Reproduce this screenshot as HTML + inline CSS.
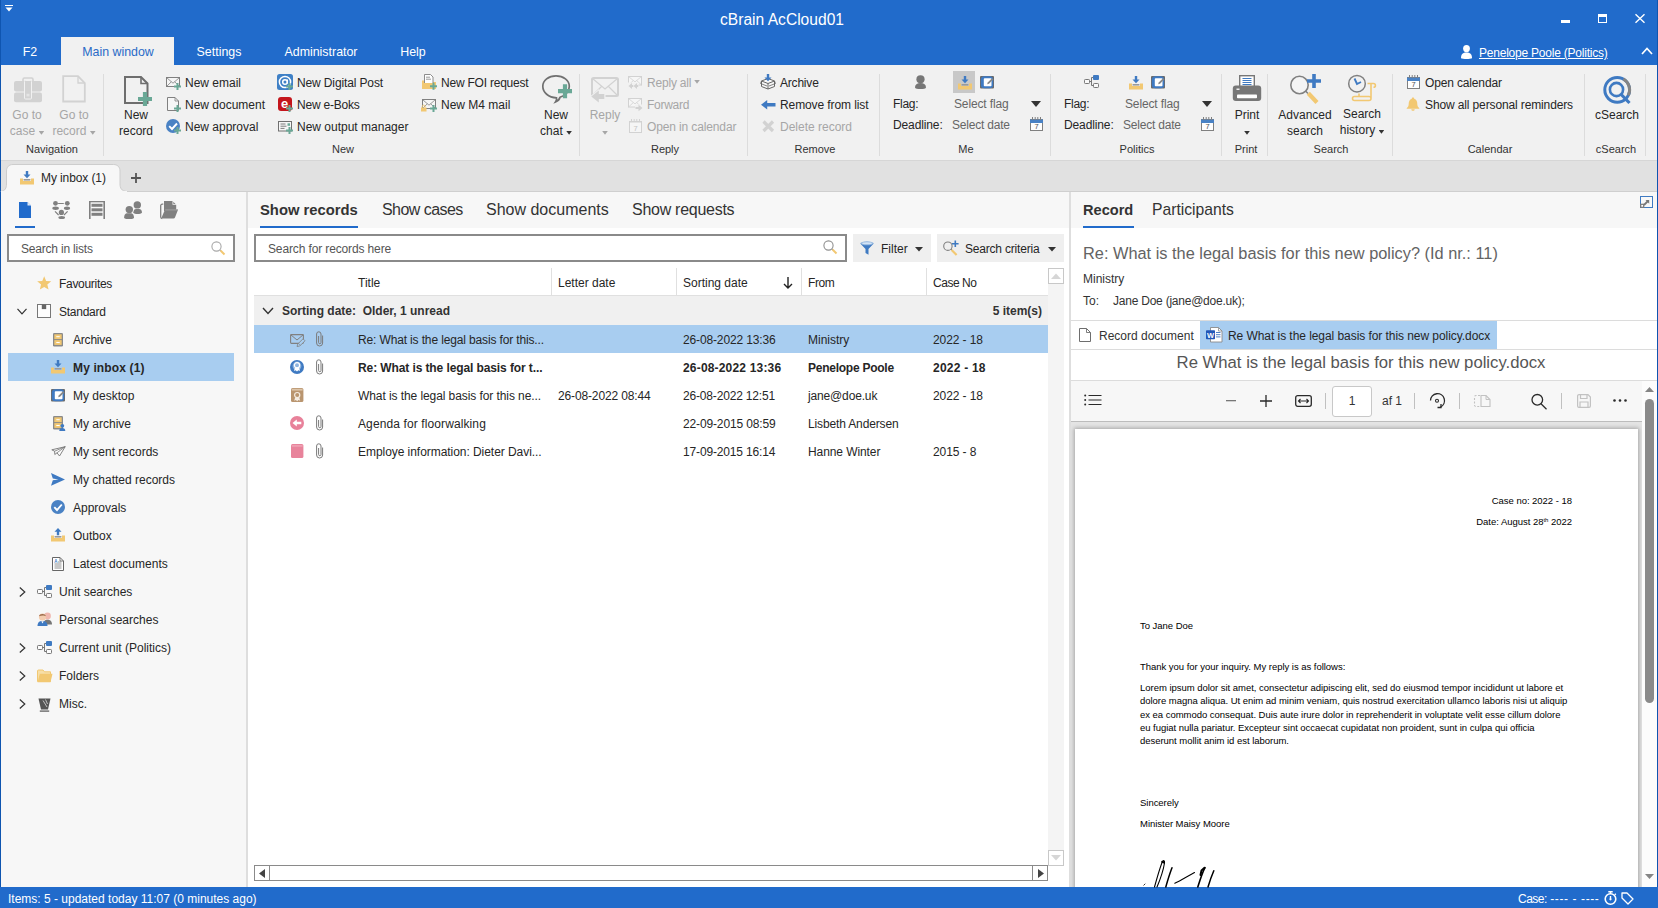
<!DOCTYPE html>
<html lang="en"><head><meta charset="utf-8"><title>cBrain AcCloud01</title>
<style>
*{box-sizing:border-box;margin:0;padding:0}
html,body{width:1658px;height:908px;overflow:hidden;background:#fff}
body{font-family:"Liberation Sans",sans-serif;font-size:12px;color:#262626;position:relative}
.a{position:absolute;white-space:pre}
.t{position:absolute;white-space:pre;line-height:16px;height:16px}
.c{text-align:center}
.dis{color:#a6a6a6}
.w{color:#fff}
svg{position:absolute;overflow:visible}
.dd{display:inline-block;width:5.6px;height:3.6px;background:#333;clip-path:polygon(0 0,100% 0,50% 100%);margin-left:3.5px;vertical-align:middle;position:relative;top:1px}
.dd.solo{margin-left:0}
.sep{position:absolute;width:1px;background:#dcdcdc;top:74px;height:82px}
</style></head>
<body>
<div class="a" style="left:0px;top:0px;width:1658px;height:65px;background:#216bcb;"></div>
<div class="a" style="left:0px;top:65px;width:1658px;height:96px;background:#f1f1f1;"></div>
<div class="a" style="left:0px;top:160px;width:1658px;height:1px;background:#d6d6d6;"></div>
<div class="a" style="left:0px;top:161px;width:1658px;height:30px;background:#e1e1e1;"></div>
<div class="a" style="left:0px;top:191px;width:1658px;height:1px;background:#cfcfcf;"></div>
<div class="a" style="left:0px;top:0px;width:1px;height:908px;background:#0f55b0;"></div>
<div class="a" style="left:1657px;top:0px;width:1px;height:908px;background:#0f55b0;"></div>
<div class="t c w" style="left:632.0px;width:300px;top:11px;font-size:15.6px;line-height:20px;height:20px;top:10px">cBrain AcCloud01</div>
<div class="a" style="left:1561px;top:20px;width:9px;height:3px;background:#fff;"></div>
<div class="a" style="left:1598px;top:14px;width:9px;height:9px;border:1px solid #fff;border-top-width:3px"></div>
<svg style="left:1635px;top:14px" width="10" height="9" viewBox="0 0 10 9"><path d="M0.5 0.2L9.5 8.8M9.5 0.2L0.5 8.8" stroke="#fff" stroke-width="1.4" fill="none"/></svg>
<svg style="left:5px;top:5px" width="8" height="7" viewBox="0 0 8 7"><rect x="0" y="0" width="8" height="1" fill="#fff"/><path d="M0.5 2.5h7L4 6.5z" fill="#fff"/></svg>
<div class="a" style="left:61px;top:37px;width:113px;height:28px;background:#f1f1f1;"></div>
<div class="t c w" style="left:-30.0px;width:120px;top:44px;font-size:12.4px">F2</div>
<div class="t c " style="left:58.0px;width:120px;top:44px;font-size:12.4px;color:#2a6bc7">Main window</div>
<div class="t c w" style="left:159.0px;width:120px;top:44px;font-size:12.4px">Settings</div>
<div class="t c w" style="left:261.0px;width:120px;top:44px;font-size:12.4px">Administrator</div>
<div class="t c w" style="left:353.0px;width:120px;top:44px;font-size:12.4px">Help</div>
<svg style="left:1461px;top:45px" width="11" height="14" viewBox="0 0 11 14"><ellipse cx="5.5" cy="3.6" rx="3.4" ry="3.6" fill="#fff"/><path d="M0 13.2c0-4 2-5.6 5.5-5.6s5.5 1.600 5.500 5.600c-1.500 1-9.500 1-11 0z" fill="#fff"/></svg>
<div class="t w" style="left:1479px;top:45px;font-size:12px;letter-spacing:-0.22px;text-decoration:underline;text-underline-offset:0.5px">Penelope Poole (Politics)</div>
<svg style="left:1641px;top:47px" width="12" height="8" viewBox="0 0 12 8"><path d="M1 7L6 1.500L11 7" stroke="#fff" stroke-width="1.700" fill="none"/></svg>
<div class="sep" style="left:103px"></div>
<div class="sep" style="left:579px"></div>
<div class="sep" style="left:747px"></div>
<div class="sep" style="left:879px"></div>
<div class="sep" style="left:1050px"></div>
<div class="sep" style="left:1221px"></div>
<div class="sep" style="left:1267px"></div>
<div class="sep" style="left:1392px"></div>
<div class="sep" style="left:1584px"></div>
<div class="sep" style="left:1645px"></div>
<div class="t c " style="left:-8.0px;width:120px;top:141px;color:#333;font-size:11px">Navigation</div>
<div class="t c " style="left:283.0px;width:120px;top:141px;color:#333;font-size:11px">New</div>
<div class="t c " style="left:605.0px;width:120px;top:141px;color:#333;font-size:11px">Reply</div>
<div class="t c " style="left:755.0px;width:120px;top:141px;color:#333;font-size:11px">Remove</div>
<div class="t c " style="left:906.0px;width:120px;top:141px;color:#333;font-size:11px">Me</div>
<div class="t c " style="left:1077.0px;width:120px;top:141px;color:#333;font-size:11px">Politics</div>
<div class="t c " style="left:1186.0px;width:120px;top:141px;color:#333;font-size:11px">Print</div>
<div class="t c " style="left:1271.0px;width:120px;top:141px;color:#333;font-size:11px">Search</div>
<div class="t c " style="left:1430.0px;width:120px;top:141px;color:#333;font-size:11px">Calendar</div>
<div class="t c " style="left:1556.0px;width:120px;top:141px;color:#333;font-size:11px">cSearch</div>
<div class="t c dis" style="left:-33.0px;width:120px;top:107px;">Go to</div>
<div class="t c dis" style="left:-33px;width:120px;top:123px">case<i class="dd" style="background:#a6a6a6"></i></div>
<div class="t c dis" style="left:14.0px;width:120px;top:107px;">Go to</div>
<div class="t c dis" style="left:14px;width:120px;top:123px">record<i class="dd" style="background:#a6a6a6"></i></div>
<div class="t c " style="left:76.0px;width:120px;top:107px;">New</div>
<div class="t c " style="left:76px;width:120px;top:123px">record</div>
<div class="t c " style="left:496.0px;width:120px;top:107px;">New</div>
<div class="t c " style="left:496px;width:120px;top:123px">chat<i class="dd" style="background:#333"></i></div>
<div class="t c dis" style="left:545.0px;width:120px;top:107px;">Reply</div>
<div class="t c dis" style="left:545px;width:120px;top:123px"><i class="dd solo" style="background:#a6a6a6"></i></div>
<div class="t c " style="left:1187.0px;width:120px;top:107px;">Print</div>
<div class="t c " style="left:1187px;width:120px;top:123px"><i class="dd solo" style="background:#333"></i></div>
<div class="t c " style="left:1245.0px;width:120px;top:107px;">Advanced</div>
<div class="t c " style="left:1245px;width:120px;top:123px">search</div>
<div class="t c " style="left:1302.0px;width:120px;top:106px;">Search</div>
<div class="t c " style="left:1302px;width:120px;top:122px">history<i class="dd" style="background:#333"></i></div>
<div class="t c " style="left:1557.0px;width:120px;top:107px;">cSearch</div>
<div class="t " style="left:185px;top:75px;">New email</div>
<div class="t " style="left:185px;top:97px;">New document</div>
<div class="t " style="left:185px;top:119px;">New approval</div>
<div class="t " style="left:297px;top:75px;;letter-spacing:-0.13px">New Digital Post</div>
<div class="t " style="left:297px;top:97px;;letter-spacing:-0.22px">New e-Boks</div>
<div class="t " style="left:297px;top:119px;">New output manager</div>
<div class="t " style="left:441px;top:75px;;letter-spacing:-0.22px">New FOI request</div>
<div class="t " style="left:441px;top:97px;">New M4 mail</div>
<div class="t " style="left:780px;top:75px;;letter-spacing:-0.2px">Archive</div>
<div class="t " style="left:780px;top:97px;;letter-spacing:-0.1px">Remove from list</div>
<div class="t " style="left:1425px;top:75px;;letter-spacing:-0.15px">Open calendar</div>
<div class="t " style="left:1425px;top:97px;;letter-spacing:-0.127px">Show all personal reminders</div>
<div class="t dis" style="left:647px;top:75px"><span style="letter-spacing:-0.2px">Reply all</span><i class="dd" style="background:#a6a6a6;top:-2px;margin-left:3px"></i></div>
<div class="t dis" style="left:647px;top:97px;;letter-spacing:-0.28px">Forward</div>
<div class="t dis" style="left:647px;top:119px;;letter-spacing:-0.13px">Open in calendar</div>
<div class="t dis" style="left:780px;top:119px;">Delete record</div>
<div class="t " style="left:893px;top:96px;;letter-spacing:-0.3px">Flag:</div>
<div class="t " style="left:893px;top:117px;;letter-spacing:-0.12px">Deadline:</div>
<div class="t " style="left:954px;top:96px;color:#666;letter-spacing:-0.14px">Select flag</div>
<div class="t " style="left:952px;top:117px;color:#666;letter-spacing:-0.2px">Select date</div>
<div class="t " style="left:1064px;top:96px;;letter-spacing:-0.3px">Flag:</div>
<div class="t " style="left:1064px;top:117px;;letter-spacing:-0.12px">Deadline:</div>
<div class="t " style="left:1125px;top:96px;color:#666;letter-spacing:-0.14px">Select flag</div>
<div class="t " style="left:1123px;top:117px;color:#666;letter-spacing:-0.2px">Select date</div>
<div class="a" style="left:953px;top:71px;width:22px;height:22px;background:#c8c8c8;"></div>
<svg style="left:0px;top:161px" width="130" height="31" viewBox="0 161 130 31"><path d="M1 191.500C5 191 6.500 188 6.500 184V171C6.500 167 9 164.500 13 164.500H113.500C117.500 164.500 120 167 120 171V184C120 188 121.500 191 126.500 191.500V192H1z" fill="#f7f7f7" stroke="#cdcdcd" stroke-width="1"/><rect x="1" y="191" width="126" height="1.500" fill="#f7f7f7"/></svg>
<div class="t " style="left:41px;top:170px;letter-spacing:-0.1px">My inbox (1)</div>
<svg style="left:131px;top:173px" width="10" height="10" viewBox="0 0 10 10"><path d="M5 0v10M0 5h10" stroke="#555" stroke-width="1.800"/></svg>
<div class="a" style="left:1px;top:192px;width:245px;height:695px;background:#f7f7f7;"></div>
<div class="a" style="left:246px;top:192px;width:2px;height:695px;background:#dedede;"></div>
<div class="a" style="left:248px;top:192px;width:821px;height:36px;background:#f7f7f7;"></div>
<div class="a" style="left:1069px;top:192px;width:2px;height:695px;background:#dedede;"></div>
<div class="a" style="left:1071px;top:192px;width:586px;height:36px;background:#f7f7f7;"></div>
<div class="a" style="left:0px;top:887px;width:1658px;height:21px;background:#216bcb;"></div>
<div class="t w" style="left:8px;top:891px;">Items: 5 - updated today 11:07 (0 minutes ago)</div>
<div class="t w" style="left:1518px;top:891px"><span style="letter-spacing:-0.5px">Case:</span> <span style="letter-spacing:0.6px">---- - ----</span></div>
<div class="a" style="left:15px;top:226px;width:20px;height:2px;background:#216bcb;"></div>
<div class="a" style="left:7px;top:234px;width:228px;height:28px;background:#fff;border:2px solid #8a8a8a"></div>
<div class="t " style="left:21px;top:241px;color:#555;letter-spacing:-0.2px">Search in lists</div>
<div class="a" style="left:8px;top:353px;width:226px;height:28px;background:#a8cdf0;"></div>
<div class="t " style="left:59px;top:276px;;letter-spacing:-0.3px">Favourites</div>
<div class="t " style="left:59px;top:304px;;letter-spacing:-0.25px">Standard</div>
<svg style="left:17px;top:307.5px" width="10" height="7" viewBox="0 0 10 7"><path d="M0.500 0.800L5 5.800L9.500 0.800" stroke="#333" stroke-width="1.200" fill="none"/></svg>
<div class="t " style="left:73px;top:332px;;letter-spacing:-0.2px">Archive</div>
<div class="t " style="left:73px;top:360px;font-weight:700;letter-spacing:0.13px">My inbox (1)</div>
<div class="t " style="left:73px;top:388px;">My desktop</div>
<div class="t " style="left:73px;top:416px;">My archive</div>
<div class="t " style="left:73px;top:444px;">My sent records</div>
<div class="t " style="left:73px;top:472px;">My chatted records</div>
<div class="t " style="left:73px;top:500px;">Approvals</div>
<div class="t " style="left:73px;top:528px;">Outbox</div>
<div class="t " style="left:73px;top:556px;">Latest documents</div>
<div class="t " style="left:59px;top:584px;">Unit searches</div>
<svg style="left:19px;top:586.5px" width="7" height="10" viewBox="0 0 7 10"><path d="M0.800 0.500L5.800 5L0.800 9.500" stroke="#333" stroke-width="1.200" fill="none"/></svg>
<div class="t " style="left:59px;top:612px;">Personal searches</div>
<div class="t " style="left:59px;top:640px;">Current unit (Politics)</div>
<svg style="left:19px;top:642.5px" width="7" height="10" viewBox="0 0 7 10"><path d="M0.800 0.500L5.800 5L0.800 9.500" stroke="#333" stroke-width="1.200" fill="none"/></svg>
<div class="t " style="left:59px;top:668px;">Folders</div>
<svg style="left:19px;top:670.5px" width="7" height="10" viewBox="0 0 7 10"><path d="M0.800 0.500L5.800 5L0.800 9.500" stroke="#333" stroke-width="1.200" fill="none"/></svg>
<div class="t " style="left:59px;top:696px;">Misc.</div>
<svg style="left:19px;top:698.5px" width="7" height="10" viewBox="0 0 7 10"><path d="M0.800 0.500L5.800 5L0.800 9.500" stroke="#333" stroke-width="1.200" fill="none"/></svg>
<div class="a" style="left:260px;top:226px;width:98px;height:2px;background:#216bcb;"></div>
<div class="t " style="left:260px;top:202px;font-size:14.8px;font-weight:700;line-height:20px;height:20px;top:200px;color:#333">Show records</div>
<div class="t " style="left:382px;top:202px;font-size:16px;line-height:20px;height:20px;top:200px;color:#333;letter-spacing:-0.55px">Show cases</div>
<div class="t " style="left:486px;top:202px;font-size:16px;line-height:20px;height:20px;top:200px;color:#333">Show documents</div>
<div class="t " style="left:632px;top:202px;font-size:16px;line-height:20px;height:20px;top:200px;color:#333;letter-spacing:-0.27px">Show requests</div>
<div class="a" style="left:254px;top:234px;width:593px;height:28px;background:#fff;border:2px solid #8a8a8a"></div>
<div class="t " style="left:268px;top:241px;color:#555;letter-spacing:-0.13px">Search for records here</div>
<div class="a" style="left:853px;top:234px;width:78px;height:28px;background:#efefef;"></div>
<div class="t " style="left:881px;top:241px;">Filter</div>
<div class="a" style="left:937px;top:234px;width:127px;height:28px;background:#efefef;"></div>
<div class="t " style="left:965px;top:241px;letter-spacing:-0.2px">Search criteria</div>
<svg style="left:915px;top:246.7px" width="8" height="5" viewBox="0 0 8 5"><path d="M0 0h8L4 4.500z" fill="#333"/></svg>
<svg style="left:1048px;top:246.7px" width="8" height="5" viewBox="0 0 8 5"><path d="M0 0h8L4 4.500z" fill="#333"/></svg>
<div class="a" style="left:551px;top:268px;width:1px;height:28px;background:#e0e0e0;"></div>
<div class="a" style="left:676px;top:268px;width:1px;height:28px;background:#e0e0e0;"></div>
<div class="a" style="left:801px;top:268px;width:1px;height:28px;background:#e0e0e0;"></div>
<div class="a" style="left:926px;top:268px;width:1px;height:28px;background:#e0e0e0;"></div>
<div class="a" style="left:254px;top:295px;width:794px;height:1px;background:#e0e0e0;"></div>
<div class="t " style="left:358px;top:275px;">Title</div>
<div class="t " style="left:558px;top:275px;">Letter date</div>
<div class="t " style="left:683px;top:275px;">Sorting date</div>
<div class="t " style="left:808px;top:275px;;letter-spacing:-0.4px">From</div>
<div class="t " style="left:933px;top:275px;;letter-spacing:-0.45px">Case No</div>
<svg style="left:783px;top:277px" width="10" height="12" viewBox="0 0 10 12"><path d="M5 0v11M1 7L5 11L9 7" stroke="#222" stroke-width="1.400" fill="none"/></svg>
<div class="a" style="left:254px;top:296px;width:794px;height:29px;background:#f0f0f0;"></div>
<svg style="left:262px;top:307px" width="12" height="8" viewBox="0 0 12 8"><path d="M1 1L6 6.500L11 1" stroke="#333" stroke-width="1.400" fill="none"/></svg>
<div class="t " style="left:282px;top:303px;font-weight:700;color:#333">Sorting date:  Older, 1 unread</div>
<div class="t" style="left:942px;width:100px;text-align:right;top:303px;font-weight:700;color:#333">5 item(s)</div>
<div class="a" style="left:254px;top:325px;width:794px;height:28px;background:#a8cdf0;"></div>
<div class="t " style="left:358px;top:332px;;letter-spacing:-0.14px">Re: What is the legal basis for this...</div>
<div class="t " style="left:683px;top:332px;;letter-spacing:-0.14px">26-08-2022 13:36</div>
<div class="t " style="left:808px;top:332px;">Ministry</div>
<div class="t " style="left:933px;top:332px;;letter-spacing:-0.1px">2022 - 18</div>
<div class="t " style="left:358px;top:360px;font-weight:700;letter-spacing:-0.1px">Re: What is the legal basis for t...</div>
<div class="t " style="left:683px;top:360px;font-weight:700;letter-spacing:0.18px">26-08-2022 13:36</div>
<div class="t " style="left:808px;top:360px;font-weight:700;letter-spacing:-0.25px">Penelope Poole</div>
<div class="t " style="left:933px;top:360px;font-weight:700;letter-spacing:0.22px">2022 - 18</div>
<div class="t " style="left:358px;top:388px;;letter-spacing:-0.08px">What is the legal basis for this ne...</div>
<div class="t " style="left:558px;top:388px;;letter-spacing:-0.14px">26-08-2022 08:44</div>
<div class="t " style="left:683px;top:388px;;letter-spacing:-0.17px">26-08-2022 12:51</div>
<div class="t " style="left:808px;top:388px;;letter-spacing:-0.15px">jane@doe.uk</div>
<div class="t " style="left:933px;top:388px;;letter-spacing:-0.1px">2022 - 18</div>
<div class="t " style="left:358px;top:416px;;letter-spacing:0.11px">Agenda for floorwalking</div>
<div class="t " style="left:683px;top:416px;;letter-spacing:-0.14px">22-09-2015 08:59</div>
<div class="t " style="left:808px;top:416px;;letter-spacing:-0.14px">Lisbeth Andersen</div>
<div class="t " style="left:358px;top:444px;;letter-spacing:-0.05px">Employe information: Dieter Davi...</div>
<div class="t " style="left:683px;top:444px;;letter-spacing:-0.15px">17-09-2015 16:14</div>
<div class="t " style="left:808px;top:444px;;letter-spacing:-0.09px">Hanne Winter</div>
<div class="t " style="left:933px;top:444px;;letter-spacing:-0.1px">2015 - 8</div>
<div class="a" style="left:1048px;top:268px;width:16px;height:598px;background:#f4f4f4;"></div>
<div class="a" style="left:1048px;top:268px;width:16px;height:16px;background:#fff;border:1px solid #c8c8c8"></div>
<div class="a" style="left:1048px;top:850px;width:16px;height:16px;background:#fff;border:1px solid #c8c8c8"></div>
<svg style="left:1051px;top:273px" width="10" height="6" viewBox="0 0 10 6"><path d="M0 6h10L5 0.500z" fill="#d6d6d6"/></svg>
<svg style="left:1051px;top:855px" width="10" height="6" viewBox="0 0 10 6"><path d="M0 0h10L5 5.500z" fill="#d6d6d6"/></svg>
<div class="a" style="left:254px;top:865px;width:16px;height:16px;background:#fff;border:1px solid #8a8a8a"></div>
<div class="a" style="left:269px;top:865px;width:764px;height:16px;background:#fff;border:1px solid #8a8a8a"></div>
<div class="a" style="left:1032px;top:865px;width:16px;height:16px;background:#fff;border:1px solid #8a8a8a"></div>
<svg style="left:259px;top:868.500px" width="6" height="9" viewBox="0 0 6 9"><path d="M6 0v9L0 4.500z" fill="#444"/></svg>
<svg style="left:1037.500px;top:868.500px" width="6" height="9" viewBox="0 0 6 9"><path d="M0 0v9L6 4.500z" fill="#444"/></svg>
<div class="a" style="left:1083px;top:226px;width:51px;height:2px;background:#216bcb;"></div>
<div class="t " style="left:1083px;top:202px;font-size:14.6px;font-weight:700;line-height:20px;height:20px;top:200px;color:#333">Record</div>
<div class="t " style="left:1152px;top:202px;font-size:15.7px;line-height:20px;height:20px;top:200px;color:#333">Participants</div>
<div class="t " style="left:1083px;top:245px;font-size:16.35px;line-height:22px;height:22px;top:242px;color:#636363">Re: What is the legal basis for this new policy? (Id nr.: 11)</div>
<div class="t " style="left:1083px;top:271px;color:#333">Ministry</div>
<div class="t " style="left:1083px;top:293px;color:#333">To:</div>
<div class="t " style="left:1113px;top:293px;color:#333;letter-spacing:-0.23px">Jane Doe (jane@doe.uk);</div>
<div class="a" style="left:1071px;top:320px;width:586px;height:1px;background:#dcdcdc;"></div>
<div class="a" style="left:1071px;top:349px;width:586px;height:1px;background:#dcdcdc;"></div>
<div class="a" style="left:1071px;top:380px;width:586px;height:1px;background:#dcdcdc;"></div>
<div class="a" style="left:1200px;top:321px;width:297px;height:28px;background:#a8cdf0;"></div>
<div class="t " style="left:1099px;top:328px;color:#333">Record document</div>
<div class="t " style="left:1228px;top:328px;letter-spacing:-0.06px">Re What is the legal basis for this new policy.docx</div>
<div class="t c " style="left:1111.0px;width:500px;top:355px;font-size:16.7px;line-height:22px;height:22px;top:352px;color:#555">Re What is the legal basis for this new policy.docx</div>
<div class="a" style="left:1071px;top:381px;width:571px;height:40px;background:#f7f7f7;"></div>
<div class="a" style="left:1071px;top:421px;width:571px;height:1px;background:#bcbcbc;"></div>
<div class="a" style="left:1071px;top:422px;width:571px;height:465px;background:#e4e4e4;"></div>
<div class="a" style="left:1071px;top:422px;width:571px;height:465px;overflow:hidden"><div class="a" style="left:4px;top:7px;width:563px;height:470px;background:#fff;box-shadow:0 0 4px 1px rgba(0,0,0,.28)"></div></div>
<div class="a" style="left:1642px;top:381px;width:15px;height:506px;background:#fcfcfc;"></div>
<div class="a" style="left:1645px;top:399px;width:9px;height:304px;background:#8a8a8a;border-radius:4.5px"></div>
<div class="a" style="left:1332px;top:386px;width:40px;height:31px;background:#fff;border:1px solid #c8c8c8;border-radius:3px"></div>
<div class="t c " style="left:1342.0px;width:20px;top:393px;color:#333">1</div>
<div class="t " style="left:1382px;top:393px;color:#333">af 1</div>
<div class="a" style="left:1325px;top:393px;width:1px;height:16px;background:#c0c0c0;"></div>
<div class="a" style="left:1414px;top:393px;width:1px;height:16px;background:#c0c0c0;"></div>
<div class="a" style="left:1459px;top:393px;width:1px;height:16px;background:#c0c0c0;"></div>
<div class="a" style="left:1561px;top:393px;width:1px;height:16px;background:#c0c0c0;"></div>
<div class="t" style="right:86px;top:495px;font-size:9.5px;line-height:12px;height:12px;color:#000;letter-spacing:-0.03px;">Case no: 2022 - 18</div>
<div class="t" style="right:86px;top:516px;font-size:9.5px;line-height:12px;height:12px;color:#000;letter-spacing:-0.03px;">Date: August 28<span style="font-size:6px;position:relative;top:-3px">th</span> 2022</div>
<div class="t" style="left:1140px;top:620px;font-size:9.5px;line-height:12px;height:12px;color:#000;letter-spacing:-0.03px;">To Jane Doe</div>
<div class="t" style="left:1140px;top:661px;font-size:9.5px;line-height:12px;height:12px;color:#000;letter-spacing:-0.03px;">Thank you for your inquiry. My reply is as follows:</div>
<div class="t" style="left:1140px;top:682.0px;font-size:9.5px;line-height:12px;height:12px;color:#000;letter-spacing:-0.03px;">Lorem ipsum dolor sit amet, consectetur adipiscing elit, sed do eiusmod tempor incididunt ut labore et</div>
<div class="t" style="left:1140px;top:695.35px;font-size:9.5px;line-height:12px;height:12px;color:#000;letter-spacing:-0.03px;">dolore magna aliqua. Ut enim ad minim veniam, quis nostrud exercitation ullamco laboris nisi ut aliquip</div>
<div class="t" style="left:1140px;top:708.7px;font-size:9.5px;line-height:12px;height:12px;color:#000;letter-spacing:-0.03px;">ex ea commodo consequat. Duis aute irure dolor in reprehenderit in voluptate velit esse cillum dolore</div>
<div class="t" style="left:1140px;top:722.05px;font-size:9.5px;line-height:12px;height:12px;color:#000;letter-spacing:-0.03px;">eu fugiat nulla pariatur. Excepteur sint occaecat cupidatat non proident, sunt in culpa qui officia</div>
<div class="t" style="left:1140px;top:735.4px;font-size:9.5px;line-height:12px;height:12px;color:#000;letter-spacing:-0.03px;">deserunt mollit anim id est laborum.</div>
<div class="t" style="left:1140px;top:797px;font-size:9.5px;line-height:12px;height:12px;color:#000;letter-spacing:-0.03px;">Sincerely</div>
<div class="t" style="left:1140px;top:818px;font-size:9.5px;line-height:12px;height:12px;color:#000;letter-spacing:-0.03px;">Minister Maisy Moore</div>
<svg style="left:14px;top:77px" width="28" height="26" viewBox="0 0 28 26"><path d="M9 4.500V2.500a1.500 1.500 0 0 1 1.500-1.500h7a1.500 1.500 0 0 1 1.500 1.500V4.500" fill="none" stroke="#d2d2d2" stroke-width="1.600"/><rect x="0" y="4" width="28" height="10.500" rx="2" fill="#d2d2d2"/><rect x="0" y="15.500" width="28" height="9.800" rx="2" fill="#d2d2d2"/><rect x="10.500" y="3.500" width="7" height="18.500" rx="1" fill="#d2d2d2" stroke="#f1f1f1" stroke-width="1"/><rect x="12.500" y="16.800" width="3" height="2.600" fill="#e4e4e4"/></svg>
<svg style="left:62px;top:75px" width="24" height="28" viewBox="0 0 24 28"><path d="M1.200 1.200H16L22.800 8V26.500H1.200z" fill="none" stroke="#d2d2d2" stroke-width="1.800"/><path d="M16 1.200V8H22.800" fill="none" stroke="#d2d2d2" stroke-width="1.300"/></svg>
<svg style="left:124px;top:76px" width="30" height="31" viewBox="0 0 30 31"><path d="M1 1H17L23.500 7.500V27H1z" fill="none" stroke="#6e6e6e" stroke-width="2"/><path d="M17 1V7.500H23.500" fill="none" stroke="#6e6e6e" stroke-width="1.600"/><path d="M18.9 16h4.2v4.9h4.9v4.2h-4.9v4.9h-4.2v-4.9h-4.9v-4.2h4.9z" fill="#6aa896"/></svg>
<svg style="left:166px;top:77px" width="16" height="14" viewBox="0 0 16 14"><rect x="0.5" y="0.5" width="13" height="9" fill="#fff" fill-opacity="0.350" stroke="#808080" stroke-width="1"/><path d="M0.5 0.5L7.0 6.2L13.5 0.5M0.5 9.5L5.32 4.8M13.5 9.5L8.68 4.8" fill="none" stroke="#808080" stroke-width="0.8"/><path d="M10.5 6.0h2v2.5h2.5v2h-2.5v2.5h-2v-2.5h-2.5v-2h2.5z" fill="#6aa896"/></svg>
<svg style="left:166px;top:97px" width="16" height="16" viewBox="0 0 16 16"><path d="M1.500 0.500H9L12.500 4V13.500H1.500z" fill="#fff" fill-opacity="0.400" stroke="#808080" stroke-width="1"/><path d="M9 0.500V4H12.500" fill="none" stroke="#808080" stroke-width="0.800"/><path d="M10.5 8.0h2v2.5h2.5v2h-2.5v2.5h-2v-2.5h-2.5v-2h2.5z" fill="#6aa896"/></svg>
<svg style="left:166px;top:119px" width="16" height="16" viewBox="0 0 16 16"><circle cx="7" cy="7" r="7" fill="#4a82c4"/><path d="M3.200 7.200L6 10L11 4.500" fill="none" stroke="#fff" stroke-width="1.900"/><path d="M10.5 8.0h2v2.5h2.5v2h-2.5v2.5h-2v-2.5h-2.5v-2h2.5z" fill="#6aa896"/></svg>
<svg style="left:277px;top:74px" width="17" height="17" viewBox="0 0 17 17"><rect x="0" y="0" width="16" height="16" rx="2.500" fill="#3f80c6"/><circle cx="8" cy="8" r="5.600" fill="none" stroke="#fff" stroke-width="1.500"/><circle cx="8" cy="8" r="2.300" fill="none" stroke="#fff" stroke-width="1.500"/><path d="M10.400 5.500V9.500" stroke="#fff" stroke-width="1.300"/><path d="M11.5 9.0h2v2.5h2.5v2h-2.5v2.5h-2v-2.5h-2.5v-2h2.5z" fill="#6aa896"/></svg>
<svg style="left:278px;top:97px" width="16" height="16" viewBox="0 0 16 16"><rect x="0" y="0" width="14" height="14" rx="3" fill="#c4161c"/><text x="6.600" y="11.200" font-family="Liberation Sans" font-weight="700" font-size="13" fill="#fff" text-anchor="middle">e</text><path d="M10.5 8.0h2v2.5h2.5v2h-2.5v2.5h-2v-2.5h-2.5v-2h2.5z" fill="#6aa896"/></svg>
<svg style="left:278px;top:121px" width="16" height="14" viewBox="0 0 16 14"><rect x="0.500" y="0.500" width="13" height="9.500" fill="#fff" fill-opacity="0.400" stroke="#707070"/><path d="M2.500 3h5M2.500 5.200h6M2.500 7.400h4" stroke="#707070" stroke-width="0.900"/><rect x="9.500" y="2.300" width="2.500" height="2.500" fill="#6aa896"/><path d="M10.5 6.0h2v2.5h2.5v2h-2.5v2.5h-2v-2.5h-2.5v-2h2.5z" fill="#6aa896"/></svg>
<svg style="left:421px;top:74px" width="17" height="17" viewBox="0 0 17 17"><path d="M1 6.500H5.500L7 8H15V15H1z" fill="#f2c872"/><path d="M3.500 0.500H9.500L12 3V10.500H3.500z" fill="#fff" stroke="#808080" stroke-width="0.900"/><path d="M5 3.200h4M5 5.200h5" stroke="#808080" stroke-width="0.800"/><path d="M1 9H15V15H1z" fill="#f2c872"/><path d="M11.5 8.7h2v2.5h2.5v2h-2.5v2.5h-2v-2.5h-2.5v-2h2.5z" fill="#6aa896"/></svg>
<svg style="left:421px;top:99px" width="17" height="14" viewBox="0 0 17 14"><rect transform="translate(1 0)" x="0.5" y="0.5" width="13" height="9" fill="#fff" fill-opacity="0.350" stroke="#808080" stroke-width="1"/><path transform="translate(1 0)" d="M0.5 0.5L7.0 6.2L13.5 0.5M0.5 9.5L5.32 4.8M13.5 9.5L8.68 4.8" fill="none" stroke="#808080" stroke-width="0.8"/><rect x="0" y="8.500" width="5.500" height="4" fill="#f2c872"/><path d="M1.300 8.500V7.500a1.400 1.400 0 0 1 2.800 0V8.500" fill="none" stroke="#f2c872" stroke-width="0.900"/><path d="M11.5 6.0h2v2.5h2.5v2h-2.5v2.5h-2v-2.5h-2.5v-2h2.5z" fill="#6aa896"/></svg>
<svg style="left:541px;top:74px" width="32" height="30" viewBox="0 0 32 30"><path d="M15 1.800C22.500 1.800 28.300 6.500 28.300 12.300C28.300 17.500 24.500 21.500 19 23.300C18.500 25.500 17 27 14.500 28C15.500 26.500 15.800 25 15.500 23.800C7.500 23.500 1.800 18.500 1.800 12.300C1.800 6.500 7.500 1.800 15 1.800z" fill="none" stroke="#707070" stroke-width="1.700"/><path d="M21.9 10.2h4.2v4.9h4.9v4.2h-4.9v4.9h-4.2v-4.9h-4.9v-4.2h4.9z" fill="#6aa896"/></svg>
<svg style="left:591px;top:77px" width="28" height="26" viewBox="0 0 28 26"><rect x="1" y="1" width="26" height="18" rx="1.500" fill="none" stroke="#d2d2d2" stroke-width="2"/><path d="M1.500 1.500L14 12L26.500 1.500M1.500 18.500L10.500 9.500M26.500 18.500L17.500 9.500" fill="none" stroke="#d2d2d2" stroke-width="1.200"/><path d="M-1 19.500L8 12V15.800H14.500V23.200H8V27z" fill="#f1f1f1"/><path d="M0.300 19.500L7.800 13.500V17H13.300V22H7.800V25.500z" fill="#d2d2d2"/></svg>
<svg style="left:628px;top:76px" width="15" height="14" viewBox="0 0 15 14"><rect x="0.5" y="0.5" width="13" height="8.5" fill="#fff" fill-opacity="0.350" stroke="#d2d2d2" stroke-width="1"/><path d="M0.5 0.5L7.0 5.89L13.5 0.5M0.5 9.0L5.32 4.56M13.5 9.0L8.68 4.56" fill="none" stroke="#d2d2d2" stroke-width="0.8"/><rect x="0" y="6.500" width="10.500" height="7.500" fill="#f1f1f1"/><path d="M0.500 10L4 7V9H5.200V11H4V13zM5.500 10L9 7V9H10.200V11H9V13z" fill="#d2d2d2"/></svg>
<svg style="left:628px;top:98px" width="15" height="14" viewBox="0 0 15 14"><rect x="0.5" y="0.5" width="13" height="8.5" fill="#fff" fill-opacity="0.350" stroke="#d2d2d2" stroke-width="1"/><path d="M0.5 0.5L7.0 5.89L13.5 0.5M0.5 9.0L5.32 4.56M13.5 9.0L8.68 4.56" fill="none" stroke="#d2d2d2" stroke-width="0.8"/><rect x="7" y="6.500" width="8" height="7.500" fill="#f1f1f1"/><path d="M14.500 10L10.500 6.800V9H7.500V11H10.500V13.200z" fill="#d2d2d2"/></svg>
<svg style="left:629px;top:119px" width="13" height="14" viewBox="0 0 13 14"><rect x="0.500" y="2.500" width="12" height="11" fill="#fff" fill-opacity="0.3" stroke="#d2d2d2" stroke-width="1"/><rect x="0" y="2.500" width="13" height="1" fill="#d2d2d2"/><path d="M2.500 0v3M5.200 0v3M7.800 0v3M10.500 0v3" stroke="#d2d2d2" stroke-width="1"/><text x="6.500" y="12.300" font-family="Liberation Sans" font-size="7.500" fill="#c4c4c4" text-anchor="middle">7</text></svg>
<svg style="left:1030px;top:117px" width="13" height="14" viewBox="0 0 13 14"><rect x="0.500" y="2.500" width="12" height="11" fill="#fff" fill-opacity="0.9" stroke="#808080" stroke-width="1"/><rect x="0" y="2.500" width="13" height="3.5" fill="#4a82c4"/><path d="M2.500 0v3M5.200 0v3M7.800 0v3M10.500 0v3" stroke="#808080" stroke-width="1"/><text x="6.500" y="12.300" font-family="Liberation Sans" font-size="7.500" fill="#555" text-anchor="middle">7</text></svg>
<svg style="left:1201px;top:117px" width="13" height="14" viewBox="0 0 13 14"><rect x="0.500" y="2.500" width="12" height="11" fill="#fff" fill-opacity="0.9" stroke="#808080" stroke-width="1"/><rect x="0" y="2.500" width="13" height="3.5" fill="#4a82c4"/><path d="M2.500 0v3M5.200 0v3M7.800 0v3M10.500 0v3" stroke="#808080" stroke-width="1"/><text x="6.500" y="12.300" font-family="Liberation Sans" font-size="7.500" fill="#555" text-anchor="middle">7</text></svg>
<svg style="left:1407px;top:75px" width="13" height="14" viewBox="0 0 13 14"><rect x="0.500" y="2.500" width="12" height="11" fill="#fff" fill-opacity="0.9" stroke="#808080" stroke-width="1"/><rect x="0" y="2.500" width="13" height="3.5" fill="#4a82c4"/><path d="M2.500 0v3M5.200 0v3M7.800 0v3M10.500 0v3" stroke="#808080" stroke-width="1"/><text x="6.500" y="12.300" font-family="Liberation Sans" font-size="7.500" fill="#555" text-anchor="middle">7</text></svg>
<svg style="left:760px;top:73px" width="16" height="17" viewBox="0 0 16 17"><path d="M1.500 8L8 5.500L14.500 8V13.500L8 16L1.500 13.500z" fill="#fff" fill-opacity="0.500" stroke="#666" stroke-width="1"/><path d="M1.500 8L8 10.500L14.500 8M8 10.500V16" fill="none" stroke="#666" stroke-width="1"/><path d="M1.500 8L0.500 10.500L7 13M14.500 8L15.500 10.500L9 13" fill="none" stroke="#666" stroke-width="0.800"/><path d="M6.800 1H9.200V4.500H11.500L8 8.200L4.500 4.500H6.800z" fill="#3f7ac2"/></svg>
<svg style="left:761px;top:100px" width="15" height="10" viewBox="0 0 15 10"><path d="M0 4.700L6.200 0V3H14.500V6.500H6.200V9.500z" fill="#3f7ac2"/></svg>
<svg style="left:762px;top:120px" width="13" height="13" viewBox="0 0 13 13"><path d="M1.500 1.500L11 11M11 1.500L1.500 11" stroke="#d2d2d2" stroke-width="3.200"/></svg>
<svg style="left:914.5px;top:75px" width="11" height="15" viewBox="0 0 11 15"><circle cx="5.500" cy="4.300" r="4.100" fill="#777"/><path d="M0 12.500C0 9.500 2 8 5.500 8S11 9.500 11 12.500C11 14.500 0 14.500 0 12.500z" fill="#777"/></svg>
<svg style="left:958px;top:75.5px" width="14" height="14" viewBox="0 0 14 14"><path d="M0 7.500H3V10H11V7.500H14V13.500H0z" fill="#f2c872"/><rect x="3.600" y="8" width="6.800" height="1.600" fill="#9a9a9a"/><path d="M5.800 0H8.200V3.500H10.500L7 7.200L3.500 3.500H5.800z" fill="#3f7ac2"/></svg>
<svg style="left:1129px;top:75.5px" width="14" height="14" viewBox="0 0 14 14"><path d="M0 7.500H3V10H11V7.500H14V13.500H0z" fill="#f2c872"/><rect x="3.600" y="8" width="6.800" height="1.600" fill="#9a9a9a"/><path d="M5.800 0H8.200V3.500H10.500L7 7.200L3.500 3.500H5.800z" fill="#3f7ac2"/></svg>
<svg style="left:980px;top:76px" width="14" height="13" viewBox="0 0 14 13"><rect x="0" y="0" width="14" height="12.500" rx="1" fill="#6a6a6a"/><rect x="0.800" y="0.300" width="12.400" height="11.900" rx="3.500" fill="#3f7ac2"/><rect x="3.800" y="2.200" width="7.700" height="8.100" rx="0.800" fill="#fff"/><path d="M7.200 8.300L7.700 6.500L12 2.200L13.300 3.500L9 7.800z" fill="#888"/></svg>
<svg style="left:1151px;top:76px" width="14" height="13" viewBox="0 0 14 13"><rect x="0" y="0" width="14" height="12.500" rx="1" fill="#6a6a6a"/><rect x="0.800" y="0.300" width="12.400" height="11.900" rx="3.500" fill="#3f7ac2"/><rect x="3.800" y="2.200" width="7.700" height="8.100" rx="0.800" fill="#fff"/><path d="M7.200 8.300L7.700 6.500L12 2.200L13.300 3.500L9 7.800z" fill="#888"/></svg>
<svg style="left:1084px;top:75px" width="15" height="13" viewBox="0 0 15 13"><path d="M5.500 6.500H7.500M7.500 2.500V10.500M7.500 2.500H9.500M7.500 10.500H9.500" stroke="#777" stroke-width="1" fill="none"/><rect x="0.500" y="4.500" width="5" height="4" rx="0.800" fill="#fff" fill-opacity="0.600" stroke="#777"/><rect x="9" y="0" width="6" height="5" rx="1" fill="#3f7ac2"/><rect x="9.500" y="8.500" width="5" height="4" rx="0.800" fill="#fff" fill-opacity="0.600" stroke="#777"/></svg>
<svg style="left:1031px;top:101px" width="10" height="6" viewBox="0 0 10 6"><path d="M0 0H10L5 6z" fill="#333"/></svg>
<svg style="left:1202px;top:101px" width="10" height="6" viewBox="0 0 10 6"><path d="M0 0H10L5 6z" fill="#333"/></svg>
<svg style="left:1232px;top:75px" width="30" height="27" viewBox="0 0 30 27"><rect x="7.700" y="0.700" width="14.600" height="12" fill="#fff" stroke="#777" stroke-width="1.400"/><path d="M10.500 3.500h9M10.500 5.500h9M10.500 7.500h9M10.500 9.500h9" stroke="#3f7ac2" stroke-width="1"/><rect x="0.800" y="10.500" width="28.400" height="15.500" rx="3" fill="#777"/><rect x="5" y="19.500" width="20" height="3.800" rx="0.800" fill="#fff"/><rect x="4.500" y="13.500" width="3" height="1.500" fill="#eee"/></svg>
<svg style="left:1289px;top:73px" width="34" height="32" viewBox="0 0 34 32"><circle cx="10.500" cy="12" r="8.700" fill="#fff" fill-opacity="0.250" stroke="#808080" stroke-width="1.600"/><path d="M16.800 18.300L19 20.500" stroke="#808080" stroke-width="1.600"/><path d="M19.300 20.300L28 29.500" stroke="#f2c872" stroke-width="4.200"/><path d="M23.2 1h3.6v5.2h5.2v3.6h-5.2v5.2h-3.6v-5.2h-5.2v-3.6h5.2z" fill="#3f7ac2"/></svg>
<svg style="left:1347px;top:74px" width="30" height="30" viewBox="0 0 30 30"><path d="M20.500 9.500H26.500a1.800 1.800 0 0 1 0 3.800M24 9.500V24.500a2 2 0 0 1-2 2M7.500 22.500H22a2 2 0 0 1 0 4H7.500a2 2 0 0 1 0-4zM12 22V19.500" fill="none" stroke="#f2c872" stroke-width="1.600"/><circle cx="10" cy="9.700" r="8.300" fill="#f1f1f1" stroke="#808080" stroke-width="1.500"/><path d="M7.500 4.500L10 10L14 8" fill="none" stroke="#3f7ac2" stroke-width="1.900"/></svg>
<svg style="left:1406px;top:97px" width="14" height="14" viewBox="0 0 14 14"><path d="M7 0.500C7.800 0.500 8.200 1 8.200 1.800C10.500 2.500 11.300 4.500 11.300 7C11.300 9 12 10 13.300 11.200V11.800H0.700V11.200C2 10 2.700 9 2.700 7C2.700 4.500 3.500 2.500 5.800 1.800C5.800 1 6.200 0.500 7 0.500zM5.300 12.300H8.700C8.700 13.300 8 13.800 7 13.800S5.300 13.300 5.300 12.300z" fill="#f2c872"/></svg>
<svg style="left:1602px;top:75px" width="30" height="30" viewBox="0 0 30 30"><circle cx="15.200" cy="14.800" r="12.400" fill="none" stroke="#3f7ac2" stroke-width="3"/><path d="M21.400 4.060A12.400 12.400 0 0 1 26.300 20.400" fill="none" stroke="#858585" stroke-width="3"/><circle cx="14.500" cy="14.500" r="6.600" fill="none" stroke="#3f7ac2" stroke-width="2.600"/><path d="M19.200 19.500L27.500 28" stroke="#3f7ac2" stroke-width="3.200"/></svg>
<svg style="left:19px;top:202px" width="12" height="16" viewBox="0 0 12 16"><path d="M0 0H8.500L12 3.500V16H0z" fill="#216bcb"/><path d="M8.500 0V3.500H12z" fill="#fff" fill-opacity="0.850"/></svg>
<svg style="left:52px;top:201px" width="19" height="18" viewBox="0 0 19 18"><path d="M6.100 2.500H11.800M3 10.300L6.600 14M15.600 10.300L12 14" stroke="#808080" stroke-width="1.200" fill="none"/><circle cx="3.500" cy="2.300" r="2.400" fill="#808080"/><ellipse cx="3.600" cy="7.300" rx="3.300" ry="1.700" fill="#808080"/><circle cx="15.300" cy="2.300" r="2.400" fill="#808080"/><ellipse cx="15" cy="7.300" rx="3.100" ry="1.700" fill="#808080"/><circle cx="9.400" cy="11.400" r="2.600" fill="#808080"/><ellipse cx="9.700" cy="16.600" rx="3.300" ry="1.500" fill="#808080"/></svg>
<svg style="left:89px;top:201px" width="16" height="18" viewBox="0 0 16 18"><path d="M0.800 0V18M15.200 0V18" stroke="#808080" stroke-width="1.600"/><rect x="0" y="0" width="16" height="1.300" fill="#808080"/><rect x="2.500" y="2.800" width="11" height="3" fill="#808080"/><rect x="2.500" y="7.300" width="11" height="3" fill="#808080"/><rect x="2.500" y="11.800" width="11" height="3" fill="#808080"/></svg>
<svg style="left:124px;top:201px" width="19" height="19" viewBox="0 0 19 19"><circle cx="13.3" cy="3.9" r="3.7" fill="#808080"/><path d="M9.2 11.8C9.2 8.9 10.783999999999999 7.9 12.016 7.9H15.184C16.416 7.9 18 8.9 18 11.8C16.68 13.4 10.52 13.4 9.2 11.8z" fill="#808080"/><circle cx="5.300" cy="8.600" r="4.500" fill="#f7f7f7"/><path d="M-0.500 19C-0.500 13 2 11.500 5.300 11.500S10.800 13 10.800 19z" fill="#f7f7f7"/><circle cx="5.3" cy="8.6" r="3.7" fill="#808080"/><path d="M0.1 16.900000000000002C0.1 13.2 1.8820000000000001 12.2 3.2680000000000002 12.2H6.832C8.218 12.2 10 13.2 10 16.900000000000002C8.515 18.5 1.5850000000000002 18.5 0.1 16.900000000000002z" fill="#808080"/></svg>
<svg style="left:160px;top:201px" width="19" height="18" viewBox="0 0 19 18"><path d="M4 0.100H12.500V3.800H16.200V10H4z" fill="#808080"/><path d="M13.300 0.800L15.500 3H13.300z" fill="#808080"/><path d="M3.300 3.200H2.200A1.500 1.500 0 0 0 0.700 4.700V16A1.500 1.500 0 0 0 2.200 17.500" fill="none" stroke="#808080" stroke-width="1.300"/><path d="M1.200 17.600L4.600 9.500A1.600 1.600 0 0 1 6.100 8.400H18.100L15 16.600A1.600 1.600 0 0 1 13.500 17.600z" fill="#808080"/><path d="M5.200 8.900H17.800" stroke="#aaa" stroke-width="0.800"/></svg>
<svg style="left:211.3px;top:240.8px" width="15" height="15" viewBox="0 0 15 15"><circle cx="5.500" cy="5.500" r="4.600" fill="none" stroke="#a8a8a8" stroke-width="1.100"/><path d="M8.800 8.800L9.800 9.800" stroke="#a8a8a8" stroke-width="1.100"/><path d="M9.500 9.500L13.500 13.500" stroke="#f2c872" stroke-width="2"/></svg>
<svg style="left:823px;top:240.2px" width="15" height="15" viewBox="0 0 15 15"><circle cx="5.500" cy="5.500" r="4.600" fill="none" stroke="#909090" stroke-width="1.100"/><path d="M8.800 8.800L9.800 9.800" stroke="#909090" stroke-width="1.100"/><path d="M9.500 9.500L13.500 13.500" stroke="#f2c872" stroke-width="2"/></svg>
<svg style="left:36.8px;top:276.4px" width="15" height="15" viewBox="0 0 15 15"><polygon points="7.20,0.20 9.14,4.93 14.24,5.31 10.34,8.62 11.55,13.59 7.20,10.90 2.85,13.59 4.06,8.62 0.16,5.31 5.26,4.93" fill="#f2c872"/></svg>
<svg style="left:37px;top:304px" width="14" height="14" viewBox="0 0 14 14"><rect x="0.500" y="0.500" width="13" height="13" fill="#fff" fill-opacity="0.700" stroke="#777"/><rect x="4.800" y="0.500" width="4.400" height="4.600" fill="#666"/></svg>
<svg style="left:53px;top:332.5px" width="13" height="15" viewBox="0 0 13 15"><rect x="0" y="0" width="10" height="13.500" rx="1.300" fill="#8a8a8a"/><rect x="1.300" y="1.300" width="7.400" height="4.800" fill="#f2c872"/><rect x="1.300" y="7.100" width="7.400" height="4.800" fill="#f2c872"/><rect x="3.300" y="3.200" width="3.400" height="1" fill="#fff"/><rect x="3.300" y="9" width="3.400" height="1" fill="#fff"/></svg>
<svg style="left:53px;top:416px" width="13" height="15" viewBox="0 0 13 15"><rect x="0" y="0" width="10" height="13.500" rx="1.300" fill="#8a8a8a"/><rect x="1.300" y="1.300" width="7.400" height="4.800" fill="#f2c872"/><rect x="1.300" y="7.100" width="7.400" height="4.800" fill="#f2c872"/><rect x="3.300" y="3.200" width="3.400" height="1" fill="#fff"/><rect x="3.300" y="9" width="3.400" height="1" fill="#fff"/><circle cx="9.300" cy="9.800" r="1.900" fill="#3f7ac2"/><path d="M6.300 15C6.300 12.800 7.500 12 9.300 12S12.300 12.800 12.300 15z" fill="#3f7ac2"/></svg>
<svg style="left:51px;top:360px" width="14" height="14" viewBox="0 0 14 14"><path d="M0 7.500H3V10H11V7.500H14V13.500H0z" fill="#f2c872"/><rect x="3.600" y="8" width="6.800" height="1.600" fill="#9a9a9a"/><path d="M5.800 0H8.200V3.500H10.500L7 7.200L3.500 3.500H5.800z" fill="#3f7ac2"/></svg>
<svg style="left:51px;top:389px" width="14" height="13" viewBox="0 0 14 13"><rect x="0" y="0" width="14" height="12.500" rx="1" fill="#6a6a6a"/><rect x="0.800" y="0.300" width="12.400" height="11.900" rx="3.500" fill="#3f7ac2"/><rect x="3.800" y="2.200" width="7.700" height="8.100" rx="0.800" fill="#fff"/><path d="M7.200 8.300L7.700 6.500L12 2.200L13.300 3.500L9 7.800z" fill="#888"/></svg>
<svg style="left:51px;top:446px" width="15" height="11" viewBox="0 0 15 11"><path d="M0.800 3.800L14.200 0.700L8.500 10L6 6.800L3.800 8.500L3.600 5.200z" fill="#fff" fill-opacity="0.500" stroke="#777" stroke-width="0.900" stroke-linejoin="round"/><path d="M14.200 0.700L3.600 5.200M14.200 0.700L6 6.800" stroke="#777" stroke-width="0.800" fill="none"/></svg>
<svg style="left:51px;top:473px" width="14" height="13" viewBox="0 0 14 13"><path d="M0 0L14 6.400L0 12.800L1.800 7.300L7.500 6.400L1.800 5.500z" fill="#3f7ac2"/></svg>
<svg style="left:51px;top:500px" width="14" height="14" viewBox="0 0 14 14"><circle cx="7" cy="7" r="7" fill="#4a82c4"/><path d="M3.300 7.200L6 10L10.800 4.500" fill="none" stroke="#fff" stroke-width="1.900"/></svg>
<svg style="left:51px;top:528px" width="14" height="14" viewBox="0 0 14 14"><path d="M0 7.500H3V10H11V7.500H14V13.500H0z" fill="#f2c872"/><rect x="3.600" y="8" width="6.800" height="1.600" fill="#9a9a9a"/><path d="M5.800 7.200H8.200V3.700H10.500L7 0L3.500 3.700H5.800z" fill="#3f7ac2"/></svg>
<svg style="left:52px;top:556.5px" width="12" height="14" viewBox="0 0 12 14"><path d="M0.500 0.500H8L11.500 4V13.500H0.500z" fill="#fff" stroke="#666" stroke-width="1"/><path d="M8 0.500V4H11.500" fill="none" stroke="#666" stroke-width="0.800"/><path d="M2.500 7h7M2.500 9h7M2.500 11h7M6 5h3.500" stroke="#777" stroke-width="0.800"/><text x="2.200" y="5.800" font-family="Liberation Sans" font-weight="700" font-size="4.500" fill="#3f7ac2">A</text></svg>
<svg style="left:37px;top:584.5px" width="15" height="13" viewBox="0 0 15 13"><path d="M5.500 6.500H7.500M7.500 2.500V10.500M7.500 2.500H9.500M7.500 10.500H9.500" stroke="#777" stroke-width="1" fill="none"/><rect x="0.500" y="4.500" width="5" height="4" rx="0.800" fill="#fff" fill-opacity="0.600" stroke="#777"/><rect x="9" y="0" width="6" height="5" rx="1" fill="#3f7ac2"/><rect x="9.500" y="8.500" width="5" height="4" rx="0.800" fill="#fff" fill-opacity="0.600" stroke="#777"/></svg>
<svg style="left:37px;top:640.5px" width="15" height="13" viewBox="0 0 15 13"><path d="M5.500 6.500H7.500M7.500 2.500V10.500M7.500 2.500H9.500M7.500 10.500H9.500" stroke="#777" stroke-width="1" fill="none"/><rect x="0.500" y="4.500" width="5" height="4" rx="0.800" fill="#fff" fill-opacity="0.600" stroke="#777"/><rect x="9" y="0" width="6" height="5" rx="1" fill="#3f7ac2"/><rect x="9.500" y="8.500" width="5" height="4" rx="0.800" fill="#fff" fill-opacity="0.600" stroke="#777"/></svg>
<svg style="left:37px;top:612px" width="16" height="14" viewBox="0 0 16 14"><circle cx="10.500" cy="4" r="3.400" fill="#f0b8b0"/><path d="M6.500 12.500C6.500 9 8 7.800 10.500 7.800S15 9 15 12.500z" fill="#777"/><circle cx="5.500" cy="5" r="3.600" fill="#f3cdb0"/><path d="M2 4.200C2.500 1.500 8 1 9 4.200C7.500 3.300 4 3.300 2 4.200z" fill="#9a6a4a"/><path d="M0.500 14C0.500 10.300 2.500 9 5.500 9S10.500 10.300 10.500 14z" fill="#3f7ac2"/><path d="M4.300 9.200L5.500 11.500L6.700 9.200z" fill="#fff"/></svg>
<svg style="left:37px;top:669px" width="16" height="14" viewBox="0 0 16 14"><path d="M0.500 2a1 1 0 0 1 1-1H6L7.500 2.800H13.500V12.500H0.500z" fill="#f7dfa8" stroke="#f2c872" stroke-width="1"/><path d="M2.800 4.800H15.500L13.500 13.300H0.600z" fill="#f2c872"/></svg>
<svg style="left:38px;top:698px" width="13" height="14" viewBox="0 0 13 14"><path d="M0.500 0.500H12.500L10 11.500H3z" fill="#555"/><path d="M5 2.500L9 9M7.500 1.500L9.500 6" stroke="#ccc" stroke-width="0.900"/><rect x="1.800" y="12.500" width="9.400" height="1.200" fill="#555"/></svg>
<svg style="left:20px;top:170.5px" width="14" height="14" viewBox="0 0 14 14"><path d="M0 7.500H3V10H11V7.500H14V13.500H0z" fill="#f2c872"/><rect x="3.600" y="8" width="6.800" height="1.600" fill="#9a9a9a"/><path d="M5.800 0H8.200V3.500H10.500L7 7.200L3.500 3.500H5.800z" fill="#3f7ac2"/></svg>
<svg style="left:315.5px;top:331px" width="8" height="16" viewBox="0 0 8 16"><path d="M6.600 4.500V12A3 3 0 0 1 0.600 12V3A2.200 2.200 0 0 1 5 3V11.500A1 1 0 0 1 2.600 11.500V5" fill="none" stroke="#7a7a7a" stroke-width="1"/></svg>
<svg style="left:315.5px;top:359px" width="8" height="16" viewBox="0 0 8 16"><path d="M6.600 4.500V12A3 3 0 0 1 0.600 12V3A2.200 2.200 0 0 1 5 3V11.500A1 1 0 0 1 2.600 11.500V5" fill="none" stroke="#7a7a7a" stroke-width="1"/></svg>
<svg style="left:315.5px;top:415px" width="8" height="16" viewBox="0 0 8 16"><path d="M6.600 4.500V12A3 3 0 0 1 0.600 12V3A2.200 2.200 0 0 1 5 3V11.500A1 1 0 0 1 2.600 11.500V5" fill="none" stroke="#7a7a7a" stroke-width="1"/></svg>
<svg style="left:315.5px;top:443px" width="8" height="16" viewBox="0 0 8 16"><path d="M6.600 4.500V12A3 3 0 0 1 0.600 12V3A2.200 2.200 0 0 1 5 3V11.500A1 1 0 0 1 2.600 11.500V5" fill="none" stroke="#7a7a7a" stroke-width="1"/></svg>
<svg style="left:290px;top:334px" width="16" height="14" viewBox="0 0 16 14"><rect x="0.600" y="0.600" width="12.800" height="8.800" rx="0.800" fill="none" stroke="#808080" stroke-width="1.100"/><path d="M0.800 0.800L7 6L13.200 0.800" fill="none" stroke="#808080" stroke-width="1"/><path d="M7 12.500L7.800 10L13 4.800L15 6.800L9.800 12z" fill="#a8cdf0" stroke="#808080" stroke-width="0.800"/><path d="M8.600 9.400L10.300 11.100" stroke="#808080" stroke-width="0.700"/></svg>
<svg style="left:290px;top:360px" width="14" height="14" viewBox="0 0 14 14"><circle cx="7" cy="7" r="7" fill="#3f7ac2"/><circle cx="7" cy="6" r="4.400" fill="#8fb4de"/><circle cx="7" cy="5.3" r="2.600" fill="none" stroke="#fff" stroke-width="1.200"/><path d="M5 7.5L4 11.0L5.7 10.3L7 11.5L8.3 10.3L10 11.0L9 7.5z" fill="#fff"/></svg>
<svg style="left:291px;top:388px" width="13" height="14" viewBox="0 0 13 14"><rect x="0" y="0" width="12.400" height="14" rx="1.500" fill="#b9956f"/><rect x="0.800" y="0.800" width="10.800" height="1.800" fill="#dcc4a8"/><circle cx="6.2" cy="7.1000000000000005" r="2.600" fill="none" stroke="#f4ece2" stroke-width="1.200"/><path d="M4.2 9.3L3.2 12.8L4.9 12.100000000000001L6.2 13.3L7.5 12.100000000000001L9.2 12.8L8.2 9.3z" fill="#f4ece2"/></svg>
<svg style="left:290px;top:416px" width="14" height="14" viewBox="0 0 14 14"><circle cx="7" cy="7" r="7" fill="#e8819a"/><path d="M2.500 7L6.800 3.500V5.700H11.300V8.300H6.800V10.500z" fill="#fff"/></svg>
<svg style="left:291px;top:444px" width="13" height="14" viewBox="0 0 13 14"><rect x="0" y="0" width="12.400" height="14" rx="1.500" fill="#e8839b"/><rect x="0.800" y="1.500" width="10.800" height="0.900" fill="#f4bcc8"/></svg>
<svg style="left:860px;top:241px" width="14" height="14" viewBox="0 0 14 14"><path d="M0.300 2.500H13.700L8.500 8V13.800L5.500 12V8z" fill="#3f7ac2"/><ellipse cx="7" cy="2.300" rx="6.700" ry="2" fill="#8fb4de"/><ellipse cx="7" cy="2.300" rx="5" ry="1" fill="#d4e3f4"/></svg>
<svg style="left:943px;top:240px" width="16" height="16" viewBox="0 0 16 16"><circle cx="4.900" cy="6.200" r="4.200" fill="none" stroke="#808080" stroke-width="1.100"/><path d="M7.900 9.200L8.800 10.100" stroke="#808080" stroke-width="1.100"/><path d="M8.600 9.900L13.600 15" stroke="#f2c872" stroke-width="2.200"/><path d="M11.5 0.40000000000000036h1.6v2.5h2.5v1.6h-2.5v2.5h-1.6v-2.5h-2.5v-1.6h2.5z" fill="#3f7ac2"/></svg>
<svg style="left:1079px;top:327.8px" width="12" height="14" viewBox="0 0 12 14"><path d="M0.500 0.500H7.500L11.500 4.500V13.500H0.500z" fill="#fff" stroke="#6e6e6e" stroke-width="1"/><path d="M7.500 0.500V4.500H11.500" fill="none" stroke="#6e6e6e" stroke-width="0.900"/></svg>
<svg style="left:1205.5px;top:327px" width="17" height="16" viewBox="0 0 17 16"><path d="M4.500 0.500H12.500L16 4V15H4.500z" fill="#fff" stroke="#8a8a8a" stroke-width="0.900"/><path d="M12.500 0.500V4H16" fill="none" stroke="#8a8a8a" stroke-width="0.800"/><path d="M10 5.500h4.500M10 7.700h4.500M10 9.900h4.500" stroke="#3a6fc0" stroke-width="0.900"/><rect x="0" y="3.300" width="9" height="9" rx="0.800" fill="#2357b8"/><text x="4.500" y="10.600" font-family="Liberation Sans" font-weight="700" font-size="7.500" fill="#fff" text-anchor="middle">W</text></svg>
<svg style="left:1640px;top:196px" width="13" height="12" viewBox="0 0 13 12"><rect x="0.500" y="0.500" width="12" height="11" fill="#f8f8f8" stroke="#3f7ac2" stroke-width="1"/><path d="M4 9L8 5" stroke="#777" stroke-width="1.800" fill="none"/><path d="M5.500 4H9.200V7.700z" fill="#777"/><rect x="0.700" y="8.300" width="3" height="3" fill="#fff" stroke="#777" stroke-width="1.200"/></svg>
<svg style="left:1084px;top:394px" width="18" height="12" viewBox="0 0 18 12"><circle cx="1.200" cy="1.500" r="1" fill="#2a2a2a"/><circle cx="1.200" cy="6" r="1" fill="#2a2a2a"/><circle cx="1.200" cy="10.500" r="1" fill="#2a2a2a"/><path d="M4.500 1.500H17.500M4.500 6H17.500M4.500 10.500H17.500" stroke="#2a2a2a" stroke-width="1.200"/></svg>
<svg style="left:1226px;top:400px" width="10" height="2" viewBox="0 0 10 2"><rect x="0" y="0" width="10" height="1.300" fill="#777"/></svg>
<svg style="left:1260px;top:394.5px" width="12" height="12" viewBox="0 0 12 12"><path d="M6 0V12M0 6H12" stroke="#2a2a2a" stroke-width="1.300"/></svg>
<svg style="left:1295px;top:395px" width="17" height="12" viewBox="0 0 17 12"><rect x="0.700" y="0.700" width="15.600" height="10.600" rx="2" fill="none" stroke="#2a2a2a" stroke-width="1.300"/><path d="M3.500 6H13.500M5.500 4L3.500 6L5.500 8M11.500 4L13.500 6L11.500 8" fill="none" stroke="#2a2a2a" stroke-width="1.100"/></svg>
<svg style="left:1429px;top:392px" width="17" height="18" viewBox="0 0 17 18"><path d="M1.500 8.500A7 7 0 1 1 11.500 15" fill="none" stroke="#2a2a2a" stroke-width="1.300"/><path d="M8.500 15.500H12V12" fill="none" stroke="#2a2a2a" stroke-width="1.300"/><circle cx="8" cy="8.800" r="1.500" fill="none" stroke="#2a2a2a" stroke-width="1.100"/></svg>
<svg style="left:1474px;top:395px" width="17" height="12" viewBox="0 0 17 12"><path d="M7 0.500H12L16 4.500V11.500H7z" fill="none" stroke="#c2c2c2" stroke-width="1.100"/><path d="M12 0.500V4.500H16" fill="none" stroke="#c2c2c2" stroke-width="1"/><path d="M6 0.500H2A1.500 1.500 0 0 0 0.500 2V10A1.500 1.500 0 0 0 2 11.500H6" fill="none" stroke="#c2c2c2" stroke-width="1.100" stroke-dasharray="2 1.500"/></svg>
<svg style="left:1531px;top:393px" width="17" height="17" viewBox="0 0 17 17"><circle cx="6.300" cy="6.800" r="5.300" fill="none" stroke="#2a2a2a" stroke-width="1.300"/><path d="M10 10.800L15.500 16.200" stroke="#2a2a2a" stroke-width="1.300"/></svg>
<svg style="left:1577px;top:394px" width="14" height="14" viewBox="0 0 14 14"><path d="M0.600 2A1.400 1.400 0 0 1 2 0.600H11L13.400 3V12A1.400 1.400 0 0 1 12 13.400H2A1.400 1.400 0 0 1 0.600 12z" fill="none" stroke="#c2c2c2" stroke-width="1.200"/><path d="M3.500 0.600V4.500H10V0.600M3 13.400V8H11V13.400" fill="none" stroke="#c2c2c2" stroke-width="1.200"/></svg>
<svg style="left:1613px;top:398.5px" width="14" height="3" viewBox="0 0 14 3"><circle cx="1.500" cy="1.500" r="1.300" fill="#2a2a2a"/><circle cx="7" cy="1.500" r="1.300" fill="#2a2a2a"/><circle cx="12.500" cy="1.500" r="1.300" fill="#2a2a2a"/></svg>
<svg style="left:1645px;top:387px" width="9" height="5" viewBox="0 0 9 5"><path d="M0 5H9L4.500 0z" fill="#858585"/></svg>
<svg style="left:1645px;top:874px" width="9" height="5" viewBox="0 0 9 5"><path d="M0 0H9L4.500 5z" fill="#858585"/></svg>
<svg style="left:1140px;top:856px" width="80" height="31" viewBox="1140 856 80 31"><g fill="none" stroke="#000" stroke-linecap="round"><path d="M1143.800 885.200L1145 884" stroke-width="0.800"/><path d="M1154.500 887C1157 878 1160.500 866 1162.500 861.500C1163.500 859.800 1164.800 860.500 1164.500 863C1163.500 869 1160 880 1157 887" stroke-width="1.100"/><path d="M1162.200 861.800L1164 862.500" stroke-width="2"/><path d="M1172 867.800C1170 873 1167.500 881 1165.800 887" stroke-width="1.500"/><path d="M1174.800 883.300C1180 881 1188 876 1194.500 872.500" stroke-width="1.100"/><path d="M1205 867.600C1202.500 872 1200 880 1197.800 887" stroke-width="1.600"/><path d="M1204.500 867.800L1201.500 870.500L1200.500 875" stroke-width="2"/><path d="M1213.800 870.800C1212 875 1209.800 881 1208 887" stroke-width="1.500"/></g></svg>
<svg style="left:1604px;top:891px" width="13" height="14" viewBox="0 0 13 14"><circle cx="6.500" cy="8" r="5.300" fill="none" stroke="#fff" stroke-width="1.600"/><path d="M4.300 0.800H8.700M6.500 0.800V3M6.500 5V8M10.800 2.800L11.800 3.800" stroke="#fff" stroke-width="1.400" fill="none"/><circle cx="6.500" cy="8.300" r="1.100" fill="#fff"/></svg>
<svg style="left:1621px;top:892px" width="13" height="12" viewBox="0 0 13 12"><path d="M1 1H6L12 7L7 12L1 6z" fill="none" stroke="#fff" stroke-width="1.300" stroke-linejoin="round"/></svg>
</body></html>
